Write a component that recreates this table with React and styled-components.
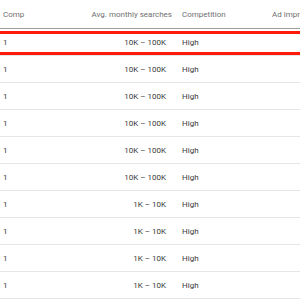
import styled, { createGlobalStyle } from "styled-components"

const GlobalStyle = createGlobalStyle`
    html, body{
        margin: 0;
        padding: 0;
        background: #FFFFFF;
        overflow: hidden;
    }
    body{
        font-family: Roboto, "Liberation Sans", sans-serif;
    }
`

const linhas = [
    { comp: "1", buscas: "10K – 100K", concorrencia: "High" },
    { comp: "1", buscas: "10K – 100K", concorrencia: "High" },
    { comp: "1", buscas: "10K – 100K", concorrencia: "High" },
    { comp: "1", buscas: "10K – 100K", concorrencia: "High" },
    { comp: "1", buscas: "10K – 100K", concorrencia: "High" },
    { comp: "1", buscas: "10K – 100K", concorrencia: "High" },
    { comp: "1", buscas: "1K – 10K", concorrencia: "High" },
    { comp: "1", buscas: "1K – 10K", concorrencia: "High" },
    { comp: "1", buscas: "1K – 10K", concorrencia: "High" },
    { comp: "1", buscas: "1K – 10K", concorrencia: "High" },
]

export default function App() {
    return (
        <>
            <GlobalStyle />
            <Tabela>
                <Cabecalho>
                    <Celula>Comp</Celula>
                    <Celula $direita>Avg. monthly searches</Celula>
                    <Celula $recuo>Competition</Celula>
                    <Celula $recuo>Ad impression share</Celula>
                </Cabecalho>
                {linhas.map((item, i) =>
                    <Linha key={i} $destaque={i === 0}>
                        <Celula>{item.comp}</Celula>
                        <Celula $direita $fim={6}>{item.buscas}</Celula>
                        <Celula $recuo>{item.concorrencia}</Celula>
                        <Celula $recuo></Celula>
                    </Linha>
                )}
            </Tabela>
        </>
    )
}

const Tabela = styled.div`
    width: 300px;
    display: flex;
    flex-direction: column;
`

const Cabecalho = styled.div`
    display: grid;
    grid-template-columns: 90px 82px 90px 1fr;
    height: 28px;
    align-items: center;
    border-bottom: 1px solid #9e9e9e;
    color: #6f6f6f;
    font-size: 8px;
    white-space: nowrap;
    overflow: hidden;
`

const Linha = styled.div`
    position: relative;
    display: grid;
    grid-template-columns: 90px 82px 90px 1fr;
    height: 26px;
    align-items: center;
    border-bottom: 1px solid #e6e6e6;
    color: #3a3a3a;
    font-size: 8px;

    &::after{
        content: "";
        display: ${props => props.$destaque ? "block" : "none"};
        position: absolute;
        left: 0;
        right: 0;
        top: 2px;
        bottom: 0;
        border-top: 3px solid #ff1a0a;
        border-bottom: 3px solid #ff1a0a;
    }
`

const Celula = styled.div`
    padding-left: ${props => props.$recuo ? "10px" : props.$direita ? "0" : "3px"};
    padding-right: ${props => props.$fim ? props.$fim + "px" : "0"};
    text-align: ${props => props.$direita ? "right" : "left"};
    white-space: nowrap;
`
